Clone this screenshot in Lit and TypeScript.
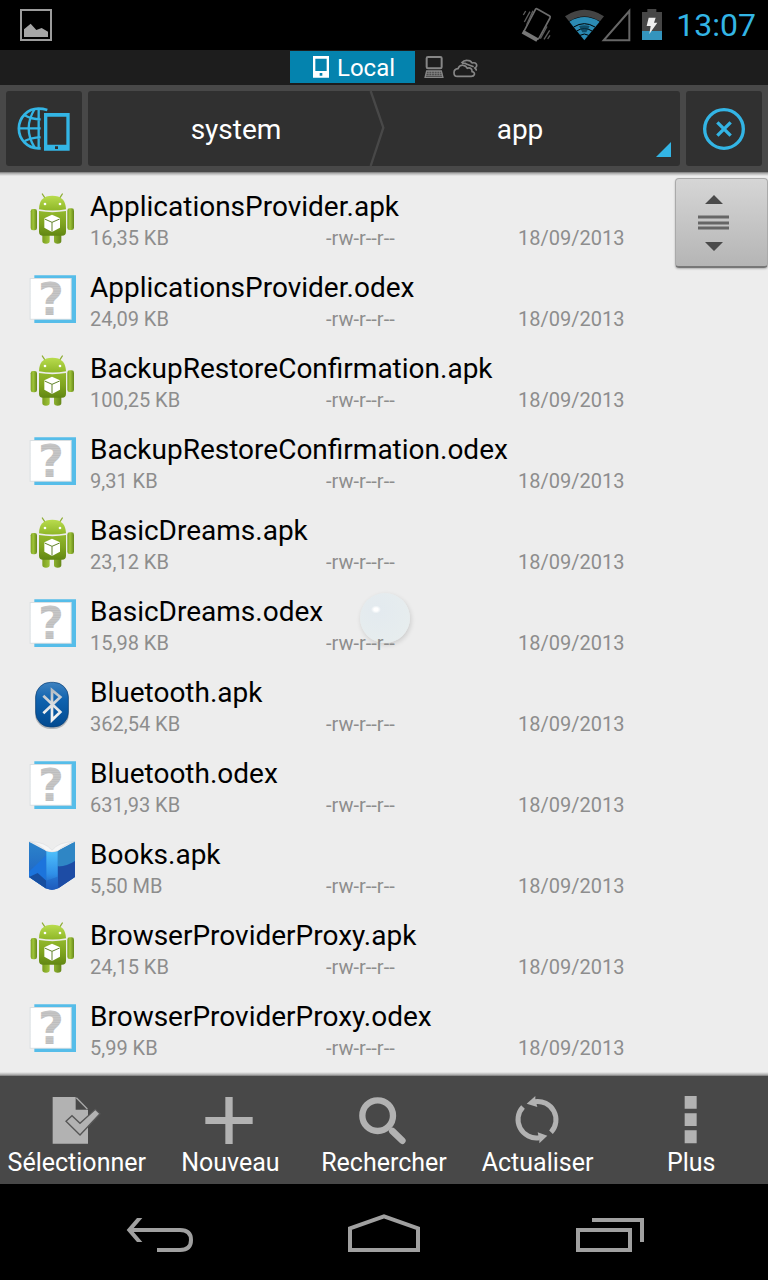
import { LitElement, html, css, svg } from "lit";
import { customElement, property } from "lit/decorators.js";

type Kind = "apk" | "odex" | "bluetooth" | "books";

interface FileEntry {
  name: string;
  size: string;
  kind: Kind;
}

const files: FileEntry[] = [
  { name: "ApplicationsProvider.apk", size: "16,35 KB", kind: "apk" },
  { name: "ApplicationsProvider.odex", size: "24,09 KB", kind: "odex" },
  { name: "BackupRestoreConfirmation.apk", size: "100,25 KB", kind: "apk" },
  { name: "BackupRestoreConfirmation.odex", size: "9,31 KB", kind: "odex" },
  { name: "BasicDreams.apk", size: "23,12 KB", kind: "apk" },
  { name: "BasicDreams.odex", size: "15,98 KB", kind: "odex" },
  { name: "Bluetooth.apk", size: "362,54 KB", kind: "bluetooth" },
  { name: "Bluetooth.odex", size: "631,93 KB", kind: "odex" },
  { name: "Books.apk", size: "5,50 MB", kind: "books" },
  { name: "BrowserProviderProxy.apk", size: "24,15 KB", kind: "apk" },
  { name: "BrowserProviderProxy.odex", size: "5,99 KB", kind: "odex" },
];

const androidIcon = html`<svg width="48" height="54" viewBox="84 31 144 162" aria-hidden="true">
  <defs>
    <linearGradient id="body" x1="0" y1="0" x2="0" y2="1"><stop offset="0" stop-color="#92b82c" /><stop offset=".5" stop-color="#7fa41f" /><stop offset="1" stop-color="#628713" /></linearGradient>
    <linearGradient id="head" x1="0" y1="0" x2="0" y2="1"><stop offset="0" stop-color="#b9dc4e" /><stop offset="1" stop-color="#8fb728" /></linearGradient>
    <linearGradient id="limb" x1="0" y1="0" x2="1" y2="0"><stop offset="0" stop-color="#7c9f20" /><stop offset=".4" stop-color="#a0c53a" /><stop offset="1" stop-color="#66881a" /></linearGradient>
  </defs>
  <path d="M127 40l9 14M187 40l-9 14" stroke="#8fae35" stroke-width="4" stroke-linecap="round" />
  <path d="M127 150h22v32q0 7-11 7t-11-7zM162 150h22v32q0 7-11 7t-11-7z" fill="url(#limb)" />
  <rect x="92" y="85" width="19" height="64" rx="7" fill="url(#limb)" />
  <rect x="202" y="83" width="20" height="65" rx="7" fill="url(#limb)" />
  <path d="M117 86q0-41 40-41t41 41q-40 7-81 0z" fill="url(#head)" />
  <path d="M117 91q40 7 81 0v62q0 12-12 12h-57q-12 0-12-12z" fill="url(#body)" />
  <circle cx="135" cy="70" r="4" fill="#fff" /><circle cx="180" cy="70" r="4" fill="#fff" />
  <path d="M156 102l24 11v28l-24 13-23-13v-28z" fill="#fff" />
  <path d="M134 115l22 10 23-10M156 125v28" fill="none" stroke="#62832a" stroke-width="3" />
</svg>`;

const unknownIcon = html`<svg width="48" height="54" viewBox="84 277 144 162" aria-hidden="true">
  <defs><pattern id="scan" width="6" height="7" patternUnits="userSpaceOnUse"><path d="M0 2h6" stroke="#fff" stroke-opacity=".4" stroke-width="2" /></pattern></defs>
  <path d="M103 287h125v143H103z" fill="#56bde9" />
  <path d="M89 295h126v125H89z" fill="#d9dfe2" />
  <path d="M92 298h120v119H92z" fill="#fff" />
  <text x="153" y="405" text-anchor="middle" font-family="DejaVu Sans, sans-serif" font-weight="700" font-size="134" fill="#bcbcbc">?</text>
  <path d="M92 298h120v119H92z" fill="url(#scan)" />
</svg>`;

const bluetoothIcon = html`<svg width="48" height="54" viewBox="24 49 144 162" aria-hidden="true">
  <defs><linearGradient id="bt" x1="0" y1="0" x2="0" y2="1"><stop offset="0" stop-color="#3e82c0" /><stop offset=".4" stop-color="#0f62ae" /><stop offset="1" stop-color="#024a90" /></linearGradient>
  <linearGradient id="rune" x1="0" y1="0" x2="0" y2="1"><stop offset="0" stop-color="#b5bcc3" /><stop offset=".8" stop-color="#f2f2f2" /></linearGradient></defs>
  <rect x="45" y="67" width="102" height="138" rx="46" fill="#9a9fa5" opacity=".7" />
  <rect x="47" y="65" width="98" height="134" rx="44" fill="url(#bt)" stroke="#0a3f75" stroke-width="2" />
  <path d="M70 105l51 49-25 24V88l25 21-51 49" fill="none" stroke="url(#rune)" stroke-width="8" />
</svg>`;

const booksIcon = html`<svg width="48" height="54" viewBox="24 538 144 162" aria-hidden="true">
  <defs><linearGradient id="spine" x1="0" y1="0" x2="0" y2="1"><stop offset="0" stop-color="#4fc0fb" /><stop offset=".6" stop-color="#2f8fe8" /><stop offset="1" stop-color="#1d55b4" /></linearGradient>
  <linearGradient id="cover" x1="0" y1="0" x2="0" y2="1"><stop offset="0" stop-color="#2c84cb" /><stop offset="1" stop-color="#1c5cc0" /></linearGradient></defs>
  <path d="M27 546l52 28q17 6 34 0l52-28v106l-50 34q-19 8-38 0l-50-34z" fill="url(#cover)" />
  <path d="M113 574l52-28v58q-30 18-52 16z" fill="#2f86c5" />
  <path d="M113 620q26 2 52-16v48l-50 34z" fill="#1d4ca5" />
  <path d="M27 636l52-50v101l-52-35z" fill="#1c74dc" />
  <path d="M27 652l26-12 26 23v24z" fill="#174e9f" />
  <path d="M79 574q17 6 34 0v112q-17 8-34 0z" fill="url(#spine)" />
  <path d="M79 663l34-12v35q-17 8-34 0z" fill="#1f62c4" opacity=".5" />
  <path d="M28 546q48 0 68 26 20-26 69-26-26 4-52 28-17 6-34 0-26-24-51-28z" fill="#f6f6f6" stroke="#c8ccd0" stroke-width="1" />
</svg>`;

const kindIcons = { apk: androidIcon, odex: unknownIcon, bluetooth: bluetoothIcon, books: booksIcon };

@customElement("status-bar")
class StatusBar extends LitElement {
  static styles = css`
    :host { display: flex; align-items: center; height: 50px; padding: 0 12px 0 20px; background: #000; }
    svg { display: block; flex: none; overflow: visible; }
    .icons { display: flex; align-items: center; margin-left: auto; }
    .wifi { margin-left: 14px; }
    .signal { margin-left: -2px; }
    .battery { margin: 0 14px 0 12px; }
    .clock { color: #33b5e5; font-size: 32px; line-height: 50px; }
  `;
  render() {
    return html`
      <svg width="32" height="32" viewBox="60 27 96 96" aria-label="Image">
        <path d="M63 30h90v90H63z" fill="none" stroke="#9c9c9c" stroke-width="6" />
        <path d="M72 111V88l20-17 17 19 16-6 19 11v16z" fill="#a6a6a6" />
      </svg>
      <div class="icons">
        <svg width="29" height="34" viewBox="42 24 87 102" aria-label="Vibreur">
          <path d="M83 27q2-2 5 0l37 21q3 2 1 6L94 113q-5 8-12 4L52 100q-6-3-3-8z" fill="none" stroke="#6c6c6c" stroke-width="5" />
          <path d="M44 95l44 25" stroke="#777" stroke-width="12" />
          <path d="M46 45l7-12M49 66l17-31M56 74l19-42M97 116l20-37M108 118l17-27M119 117l7-11" stroke="#5c5c5c" stroke-width="4" />
        </svg>
        <svg class="wifi" width="39" height="32" viewBox="171 27 117 96" aria-label="Wi-Fi">
          <path d="M171 49q58-39 117 0l-12 15q-47-29-93 0z" fill="#444" />
          <path d="M184 65q45-28 91 0l-46 56z" fill="#2b8bb4" />
          <path d="M197 81q32-20 64 0M206 93q23-15 46 0M216 106q13-8 26 0" fill="none" stroke="#000" stroke-width="3" />
          <path d="M213 78q16-5 32 0l-10 19h-12z" fill="#073a50" opacity=".75" />
        </svg>
        <svg class="signal" width="28" height="32" viewBox="282 27 84 96" aria-label="Signal">
          <path d="M364 33v88h-77z" fill="none" stroke="#666" stroke-width="6" />
        </svg>
        <svg class="battery" width="20" height="32" viewBox="402 27 60 96" aria-label="Batterie">
          <path d="M402 36h16v-9h27v9h17v84h-60z" fill="#464646" />
          <path d="M402 93h60v27h-60z" fill="#3494bd" />
          <path d="M422 53h21l-5 15h10l-24 34 4-24h-12z" fill="#eee" />
        </svg>
        <time class="clock">13:07</time>
      </div>`;
  }
}

@customElement("location-tabs")
class LocationTabs extends LitElement {
  static styles = css`
    :host { display: flex; justify-content: center; align-items: flex-start; height: 35px; padding-top: 1px; box-sizing: border-box; background: #1d1d1d; }
    button { all: unset; box-sizing: border-box; display: flex; align-items: center; height: 32px; padding-top: 2px; color: #fff; font-size: 24px; line-height: 30px; }
    .active { background: #0483ae; padding-left: 23px; padding-right: 20px; gap: 8px; }
    .other { padding-left: 9px; padding-top: 0; }
    svg { display: block; }
    .active svg { margin-bottom: 2px; }
  `;
  render() {
    return html`
      <button class="active" aria-pressed="true">
        <svg width="16" height="22" viewBox="156 169 48 66" aria-hidden="true"><path fill-rule="evenodd" d="M156 169h48v65h-48zM163 177v37h34v-37zM176 220v8h8v-8z" fill="#fff" /></svg>
        Local
      </button>
      <button class="other" aria-label="Réseau">
        <svg width="20" height="22" viewBox="491 168 60 66" aria-hidden="true"><rect x="499" y="171" width="45" height="34" rx="4" fill="none" stroke="#868686" stroke-width="6" /><path d="M499 213h44l5 20h-54z" fill="#4b4b4b" stroke="#868686" stroke-width="4" /><path d="M497 220h49M496 227h51M506 213v14M514 213v14M522 213v14M530 213v14M538 213v14" stroke="#8d8d8d" stroke-width="2" /></svg>
      </button>
      <button class="other" aria-label="Cloud">
        <svg width="25" height="22" viewBox="582 168 75 66" aria-hidden="true"><path d="M595 229q-10 0-10-11t12-12q4-12 16-10 8 1 12 9 6-3 11 1 4 4 3 9 9 2 7 9-2 5-9 5zM607 189q8-9 18-8 10 0 14 8 12-3 14 6 1 6-6 9 6 3 4 8M609 190q8-2 15 3l20 7" fill="none" stroke="#868686" stroke-width="5" stroke-linejoin="round" /></svg>
      </button>`;
  }
}

@customElement("path-bar")
class PathBar extends LitElement {
  static styles = css`
    :host { display: flex; gap: 6px; padding: 6px; background: #484848; }
    button { all: unset; display: flex; align-items: center; justify-content: center; height: 75px; box-sizing: border-box; }
    .tile { flex: none; width: 76px; background: #303030; border-radius: 3px; }
    .path { flex: 1; display: flex; background: #303030; border-radius: 3px; }
    .crumb { width: 50%; color: #fff; font-size: 28px; line-height: 36px; }
    .parent { padding-left: 14px; }
    .current { padding-right: 9px; }
    .label { flex: 1; padding-top: 2px; text-align: center; }
    .corner { align-self: flex-end; margin-bottom: 9px; }
    svg { display: block; flex: none; overflow: visible; }
  `;
  render() {
    return html`
      <button class="tile" aria-label="Emplacements">
        <svg width="52" height="44" viewBox="54 319 156 132" aria-hidden="true">
          <g fill="none" stroke="#33b5e5" stroke-width="7">
            <path d="M142 328q-13-4-27-4a58 59 0 0 0 0 119h7" stroke-width="8" />
            <path d="M116 323v120M54 383h68M104 325q-36 58 0 116M74 344q20 12 48 12M74 421q20-11 48-11" />
          </g>
          <path fill-rule="evenodd" d="M132 337h77v113h-77zM142 348v84h57v-84zM165 437v8h9v-8z" fill="#33b5e5" />
        </svg>
      </button>
      <nav class="path">
        <button class="crumb parent"><span class="label">system</span>
          <svg width="14" height="75" viewBox="330 273 42 225" aria-hidden="true"><path d="M332 273l38 110-38 115" fill="none" stroke="#484848" stroke-width="7" /></svg>
        </button>
        <button class="crumb current"><span class="label">app</span>
          <svg class="corner" width="15" height="15" viewBox="0 0 15 15" aria-hidden="true"><path d="M15 0v15H0z" fill="#33b5e5" /></svg>
        </button>
      </nav>
      <button class="tile" aria-label="Fermer">
        <svg width="42" height="42" viewBox="585 324 126 126" aria-hidden="true"><circle cx="648" cy="387" r="58" fill="none" stroke="#33b5e5" stroke-width="10" /><path d="M628 367l40 40M668 367l-40 40" stroke="#33b5e5" stroke-width="10" /></svg>
      </button>`;
  }
}

@customElement("file-row")
class FileRow extends LitElement {
  @property({ attribute: false }) file!: FileEntry;
  static styles = css`
    :host { display: block; }
    .row { all: unset; display: flex; align-items: center; gap: 14px; width: 100%; height: 81px; padding-left: 28px; box-sizing: border-box; }
    svg { display: block; flex: none; }
    .info { flex: 1; min-width: 0; display: flex; flex-direction: column; padding-top: 4px; }
    .name { color: #000; font-size: 28px; line-height: 36px; white-space: nowrap; }
    .meta { display: grid; grid-template-columns: 236fr 192fr 250fr; color: #8d8d8d; font-size: 20px; line-height: 26px; white-space: nowrap; }
  `;
  render() {
    return html`<button class="row">
      ${kindIcons[this.file.kind]}
      <span class="info">
        <span class="name">${this.file.name}</span>
        <span class="meta"><span>${this.file.size}</span><span>-rw-r--r--</span><span>18/09/2013</span></span>
      </span>
    </button>`;
  }
}

const tools = [
  {
    label: "Sélectionner",
    box: "158 108 144 144",
    art: svg`<path d="M157 111h69v38h37v102H157z" fill="#b2b2b2"/><path d="M228 113l33 34" stroke="#a8a8a8" stroke-width="4"/><path d="M197 184l18-17 24 23 46-42 14 13-60 64z" fill="#b2b2b2" stroke="#555" stroke-width="4"/>`,
  },
  { label: "Nouveau", box: "618 108 144 144", art: svg`<path d="M676 111h22v60h60v21h-60v60h-22v-60h-60v-21h60z" fill="#b2b2b2"/>` },
  {
    label: "Rechercher",
    box: "300 108 144 144",
    art: svg`<circle cx="353" cy="167" r="46" fill="none" stroke="#b2b2b2" stroke-width="19"/><path d="M397 213l30 29" stroke="#b2b2b2" stroke-width="20" stroke-linecap="round"/>`,
  },
  {
    label: "Actualiser",
    box: "18 108 144 144",
    art: svg`<g fill="none" stroke="#b2b2b2" stroke-width="15"><path d="M80 125a55 55 0 0 1 49 92"/><path d="M94 233a55 55 0 0 1-49-92"/></g><path d="M56 131l26-23v11l6 22zM118 227l-24 23v-11l-5-22z" fill="#b2b2b2"/>`,
  },
  { label: "Plus", box: "478 108 144 144", art: svg`<path d="M531 108h36v38h-36zM531 160h36v38h-36zM531 211h36v39h-36z" fill="#b2b2b2"/>` },
];

@customElement("tool-bar")
class ToolBar extends LitElement {
  static styles = css`
    :host { display: grid; grid-template-columns: repeat(5, minmax(0, 1fr)); height: 108px; background: #484848; }
    button { all: unset; display: flex; flex-direction: column; align-items: center; padding-top: 20px; color: #fff; font-size: 25px; line-height: 38px; white-space: nowrap; }
    svg { display: block; overflow: visible; }
  `;
  render() {
    return tools.map(
      (t) => html`<button><svg width="48" height="48" viewBox=${t.box} aria-hidden="true">${t.art}</svg>${t.label}</button>`
    );
  }
}

@customElement("nav-bar")
class NavBar extends LitElement {
  static styles = css`
    :host { display: grid; grid-template-columns: repeat(3, minmax(0, 1fr)); height: 96px; padding: 2px 48px 0; box-sizing: border-box; background: #000; }
    button { all: unset; display: flex; align-items: center; justify-content: center; }
    svg { display: block; overflow: visible; }
  `;
  render() {
    return html`
      <button aria-label="Retour"><svg width="72" height="42" viewBox="372 456 216 126" aria-hidden="true"><path d="M396 510h144q33 0 33 30t-33 30h-69" fill="none" stroke="#a0a0a0" stroke-width="12" /><path d="M411 474h16l-31 36 31 36h-16l-31-36z" fill="#a0a0a0" /></svg></button>
      <button aria-label="Accueil"><svg width="72" height="42" viewBox="264 456 216 126" aria-hidden="true"><path d="M270 505l102-36 102 36v65H270z" fill="none" stroke="#a0a0a0" stroke-width="12" /></svg></button>
      <button aria-label="Applications récentes"><svg width="72" height="42" viewBox="192 456 216 126" aria-hidden="true"><path d="M210 510h156v60H210zM252 480h150v66" fill="none" stroke="#a0a0a0" stroke-width="12" /></svg></button>`;
  }
}

@customElement("app-root")
class AppRoot extends LitElement {
  static styles = css`
    :host { display: flex; flex-direction: column; min-height: 100vh; background: #ededed; font-family: Roboto, sans-serif; }
    .edge { height: 4px; background: linear-gradient(#777, #b5b5b5 40%, #ededed); }
    .edge.bottom { background: linear-gradient(#ededed, #b5b5b5 60%, #777); }
    main { position: relative; flex: 1; }
    .files { position: relative; list-style: none; margin: 0; padding: 1px 0 0; }
    .thumb { position: absolute; top: 2px; right: 0; width: 93px; height: 90px; padding: 0 15px 0 0; box-sizing: border-box; border: 1px solid #aaa; border-bottom: 2px solid #777; border-radius: 4px; background: linear-gradient(#d6d6d6, #b5b5b5); display: flex; align-items: center; justify-content: center; box-shadow: 0 1px 2px rgba(0, 0, 0, 0.25); }
    .thumb svg { display: block; }
    .pointer { position: absolute; left: 360px; top: 417px; width: 50px; height: 50px; border-radius: 50%; background: radial-gradient(ellipse 5px 4px at 32% 33%, #fff 40%, transparent), radial-gradient(circle at 35% 35%, #e3eaef, #e8eeee); box-shadow: 1px 2px 5px rgba(0, 0, 0, 0.14); pointer-events: none; }
  `;
  render() {
    return html`
      <status-bar></status-bar>
      <location-tabs></location-tabs>
      <path-bar></path-bar>
      <div class="edge"></div>
      <main>
        <div class="pointer"></div>
        <ul class="files">
          ${files.map((f) => html`<li><file-row .file=${f}></file-row></li>`)}
        </ul>
        <button class="thumb" aria-label="Défilement rapide">
          <svg width="32" height="58" viewBox="0 0 32 58" aria-hidden="true"><path d="M7 10L16 1l9 9zM7 48h18l-9 9z" fill="#4a4a4a" /><path d="M0 23h31M0 29h31M0 34h31" stroke="#666" stroke-width="3" /></svg>
        </button>
      </main>
      <div class="edge bottom"></div>
      <tool-bar></tool-bar>
      <nav-bar></nav-bar>`;
  }
}
